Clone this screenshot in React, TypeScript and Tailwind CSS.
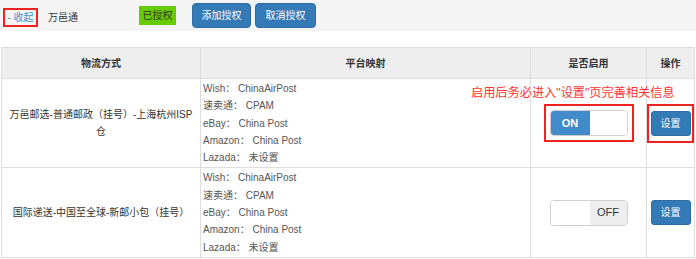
import { ReactNode } from 'react';

const mappings = [
  { platform: 'Wish', value: 'ChinaAirPost' },
  { platform: '速卖通', value: 'CPAM' },
  { platform: 'eBay', value: 'China Post' },
  { platform: 'Amazon', value: 'China Post' },
  { platform: 'Lazada', value: '未设置' }
];

function Switch({ on }: { on: boolean }) {
  return (
    <div className="inline-flex w-[78px] h-[26px] border border-[#cfcfcf] rounded-[4px] overflow-hidden align-middle">
      {on ? (
        <>
          <div className="w-[39px] h-full bg-[#428bca] text-white text-[11px] font-bold flex items-center justify-center">ON</div>
          <div className="flex-1 bg-white" />
        </>
      ) : (
        <>
          <div className="w-[39px] h-full bg-white" />
          <div className="flex-1 bg-[#eeeeee] text-[#333] text-[11px] flex items-center justify-center">OFF</div>
        </>
      )}
    </div>
  );
}

function SetButton() {
  return (
    <button className="w-[40px] h-[25px] bg-[#337ab7] border border-[#2e6da4] rounded-[3px] text-white text-[10px]">
      设置
    </button>
  );
}

function Row({ name, highlight }: { name: ReactNode; highlight?: boolean }) {
  return (
    <tr>
      <td className="border border-[#dddddd] px-[4px] text-center text-[#333] leading-[17.5px] align-middle">{name}</td>
      <td className="border border-[#dddddd] pl-[2px] py-[1px] text-[#555] leading-[17.3px] align-top">
        {mappings.map((m, i) => (
          <div key={i}>
            {m.platform}：&nbsp;{m.value}
          </div>
        ))}
      </td>
      <td className="border border-[#dddddd] text-center align-middle">
        {highlight ? (
          <div className="inline-flex items-center justify-center w-[90px] h-[38px] border-2 border-[#ee2222]">
            <Switch on />
          </div>
        ) : (
          <Switch on={false} />
        )}
      </td>
      <td className="border border-[#dddddd] text-center align-middle p-0">
        {highlight ? (
          <div className="flex items-center justify-center w-[47px] h-[39px] border-2 border-[#ee2222]">
            <SetButton />
          </div>
        ) : (
          <SetButton />
        )}
      </td>
    </tr>
  );
}

export default function App() {
  return (
    <div className="w-[696px] h-[259px] bg-white text-[10px] overflow-hidden" style={{ fontFamily: '"Liberation Sans", "Noto Sans CJK SC", sans-serif' }}>
      {/* Top bar */}
      <div className="h-[31px] bg-[#f4f4f4] flex items-center pl-[3px]">
        <div className="mt-[3px] w-[35px] h-[19px] border-2 border-[#ee2222] flex items-center justify-center text-[#428bca]">
          - 收起
        </div>
        <span className="ml-[10px] mt-[3px] text-[#333]">万邑通</span>
        <span className="ml-[61px] w-[37px] h-[19px] bg-[#66cc00] text-[#333] flex items-center justify-center">已授权</span>
        <button className="ml-[16px] w-[59px] h-[25px] bg-[#337ab7] border border-[#2e6da4] rounded-[4px] text-white">添加授权</button>
        <button className="ml-[4px] w-[61px] h-[25px] bg-[#337ab7] border border-[#2e6da4] rounded-[4px] text-white">取消授权</button>
      </div>

      {/* Table */}
      <div className="relative mt-[16px] ml-[1px]">
        <table className="w-[693px] table-fixed border-collapse">
          <colgroup>
            <col className="w-[199px]" />
            <col className="w-[330px]" />
            <col className="w-[116px]" />
            <col className="w-[48px]" />
          </colgroup>
          <thead>
            <tr className="h-[31px] bg-[#eeeeee] text-[#333] font-bold">
              <th className="border border-[#dddddd]">物流方式</th>
              <th className="border border-[#dddddd]">平台映射</th>
              <th className="border border-[#dddddd]">是否启用</th>
              <th className="border border-[#dddddd]">操作</th>
            </tr>
          </thead>
          <tbody>
            <Row
              highlight
              name={
                <>
                  万邑邮选-普通邮政（挂号）-上海杭州ISP
                  <br />仓
                </>
              }
            />
            <Row name="国际递送-中国至全球-新邮小包（挂号）" />
          </tbody>
        </table>
        <div className="absolute left-[470px] top-[38px] text-[12.2px] leading-[16px] text-[#ff3333] whitespace-nowrap">
          启用后务必进入"设置"页完善相关信息
        </div>
      </div>
    </div>
  );
}
